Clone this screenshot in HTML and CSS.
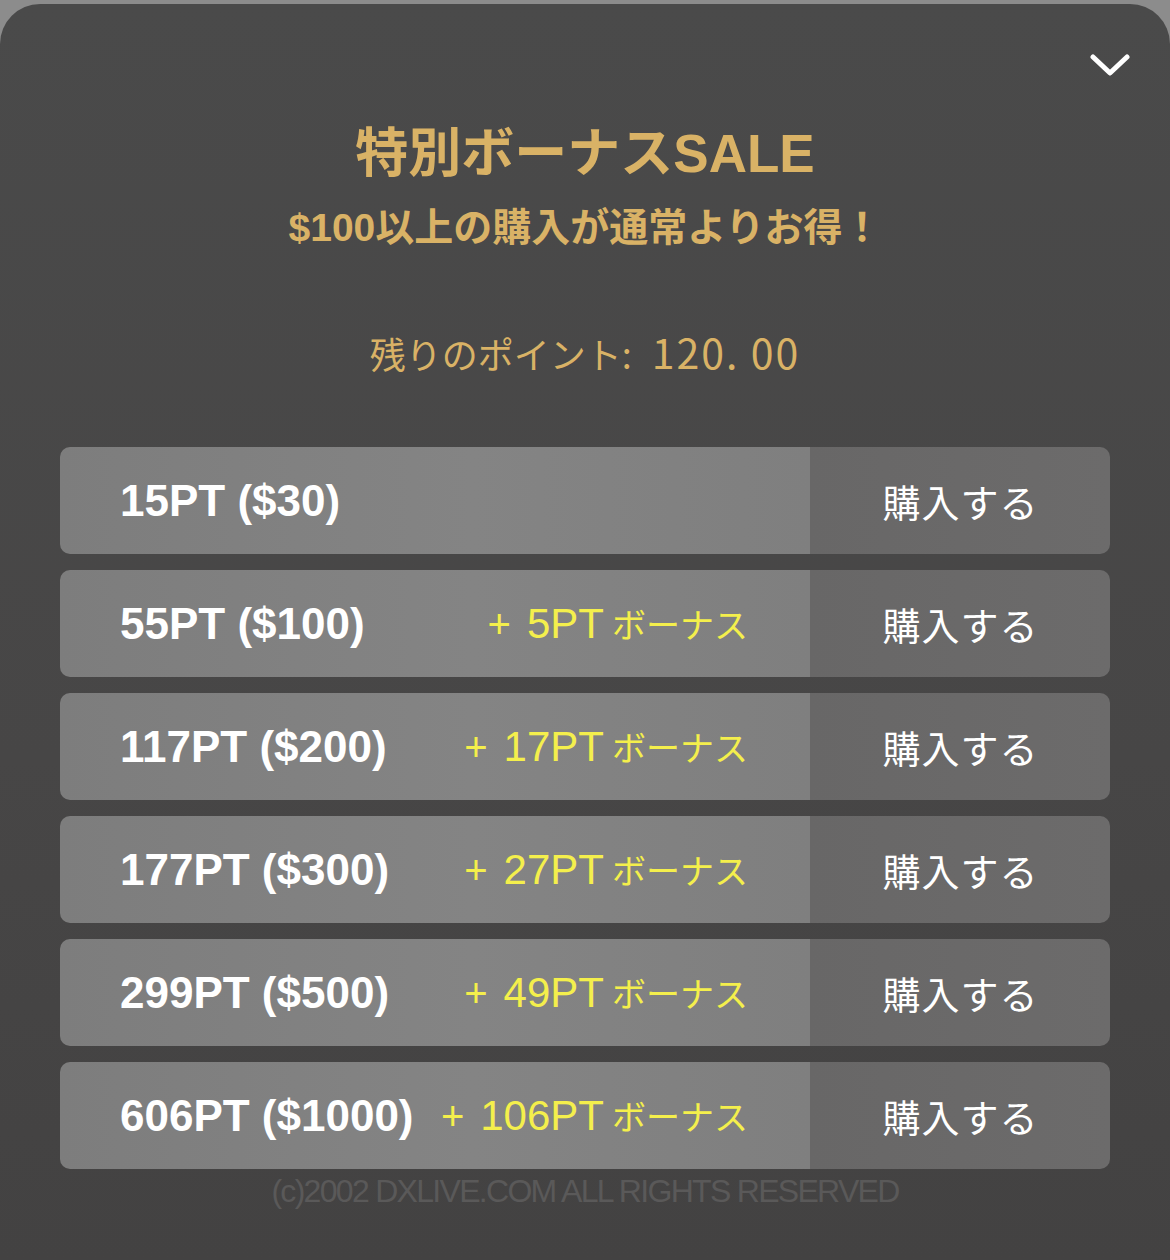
FILE: index.html
```html
<!DOCTYPE html>
<html lang="ja">
<head>
<meta charset="utf-8">
<title>特別ボーナスSALE</title>
<link rel="stylesheet" href="styles.css">
</head>
<body>
<div class="sheet">
  <button class="close" aria-label="閉じる">
    <svg width="40" height="24" viewBox="0 0 40 24"><path d="M3 3 L20 19 L37 3" fill="none" stroke="#fff" stroke-width="5" stroke-linecap="round" stroke-linejoin="round"/></svg>
  </button>
  <h1 class="title">特別ボーナスSALE</h1>
  <p class="subtitle">$100以上の購入が通常よりお得！</p>
  <p class="points"><span class="points-label">残りのポイント:</span><span class="points-value">120. 00</span></p>
  <div class="list">
    <div class="row"><div class="info"><span class="amount">15PT ($30)</span></div><div class="buy">購入する</div></div>
    <div class="row"><div class="info"><span class="amount">55PT ($100)</span><span class="bonus"><span class="plus">+</span><span class="num">5PT</span><span class="jp">ボーナス</span></span></div><div class="buy">購入する</div></div>
    <div class="row"><div class="info"><span class="amount">117PT ($200)</span><span class="bonus"><span class="plus">+</span><span class="num">17PT</span><span class="jp">ボーナス</span></span></div><div class="buy">購入する</div></div>
    <div class="row"><div class="info"><span class="amount">177PT ($300)</span><span class="bonus"><span class="plus">+</span><span class="num">27PT</span><span class="jp">ボーナス</span></span></div><div class="buy">購入する</div></div>
    <div class="row"><div class="info"><span class="amount">299PT ($500)</span><span class="bonus"><span class="plus">+</span><span class="num">49PT</span><span class="jp">ボーナス</span></span></div><div class="buy">購入する</div></div>
    <div class="row"><div class="info"><span class="amount">606PT ($1000)</span><span class="bonus"><span class="plus">+</span><span class="num">106PT</span><span class="jp">ボーナス</span></span></div><div class="buy">購入する</div></div>
  </div>
  <p class="footer">(c)2002 DXLIVE.COM ALL RIGHTS RESERVED</p>
</div>
</body>
</html>
```

FILE: styles.css
```css
html, body {
  margin: 0;
  padding: 0;
  background: #8c8c8c;
}
body {
  padding-top: 4px;
  font-family: "Liberation Sans", "Noto Sans CJK JP", sans-serif;
}
.sheet {
  position: relative;
  min-height: 1256px;
  box-sizing: border-box;
  border-radius: 40px 40px 0 0;
  background: linear-gradient(180deg, #4a4a4a 0%, #474646 60%, #434242 100%);
  padding: 0 60px;
  display: flex;
  flex-direction: column;
  align-items: center;
}
.close {
  position: absolute;
  top: 50px;
  right: 40px;
  background: none;
  border: 0;
  padding: 0;
  width: 40px;
  height: 24px;
  cursor: pointer;
}
.close svg { display: block; }
.title {
  margin: 120px 0 0;
  font-family: "Liberation Sans", "Noto Sans CJK JP", sans-serif;
  font-weight: bold;
  font-size: 53px;
  line-height: 60px;
  color: #d9b266;
  letter-spacing: 0;
}
.subtitle {
  margin: 20px 0 0;
  font-family: "Liberation Sans", "Noto Sans CJK JP", sans-serif;
  font-weight: bold;
  font-size: 39px;
  line-height: 48px;
  color: #d9b266;
}
.points {
  margin: 74px 0 0;
  color: #d9b266;
  display: flex;
  align-items: baseline;
  line-height: 50px;
}
.points-label {
  font-family: "Noto Sans CJK JP", sans-serif;
  font-size: 36px;
}
.points-value {
  font-family: "Noto Sans CJK JP", sans-serif;
  font-size: 41px;
  letter-spacing: 2px;
  margin-left: 20px;
}
.list {
  margin-top: 69px;
  align-self: stretch;
  display: flex;
  flex-direction: column;
  gap: 16px;
}
.row {
  height: 107px;
  display: flex;
  border-radius: 10px;
  overflow: hidden;
}
.info {
  flex: 0 0 750px;
  box-sizing: border-box;
  padding: 0 62px 0 60px;
  display: flex;
  align-items: center;
  justify-content: space-between;
  background: linear-gradient(90deg, #7d7d7d 0%, #848484 55%, #7f7f7f 100%);
}
.amount {
  font-family: "Liberation Sans", sans-serif;
  font-weight: bold;
  font-size: 44px;
  color: #ffffff;
}
.bonus {
  display: flex;
  align-items: baseline;
  color: #f4ef4c;
}
.plus {
  font-family: "Liberation Sans", sans-serif;
  font-size: 40px;
  margin-right: 16px;
}
.num {
  font-family: "Liberation Sans", sans-serif;
  font-size: 42px;
  margin-right: 8px;
}
.jp {
  font-family: "Noto Sans CJK JP", sans-serif;
  font-size: 34px;
}
.buy {
  flex: 1;
  display: flex;
  align-items: center;
  justify-content: center;
  background: linear-gradient(90deg, #686767 0%, #6c6b6b 100%);
  font-family: "Noto Sans CJK JP", sans-serif;
  font-size: 38px;
  letter-spacing: 1px;
  color: #ffffff;
  padding-left: 1px;
}
.footer {
  margin: 2px 0 0;
  font-family: "Liberation Sans", sans-serif;
  font-size: 32px;
  letter-spacing: -1.7px;
  line-height: 40px;
  color: #5a5959;
}
```
